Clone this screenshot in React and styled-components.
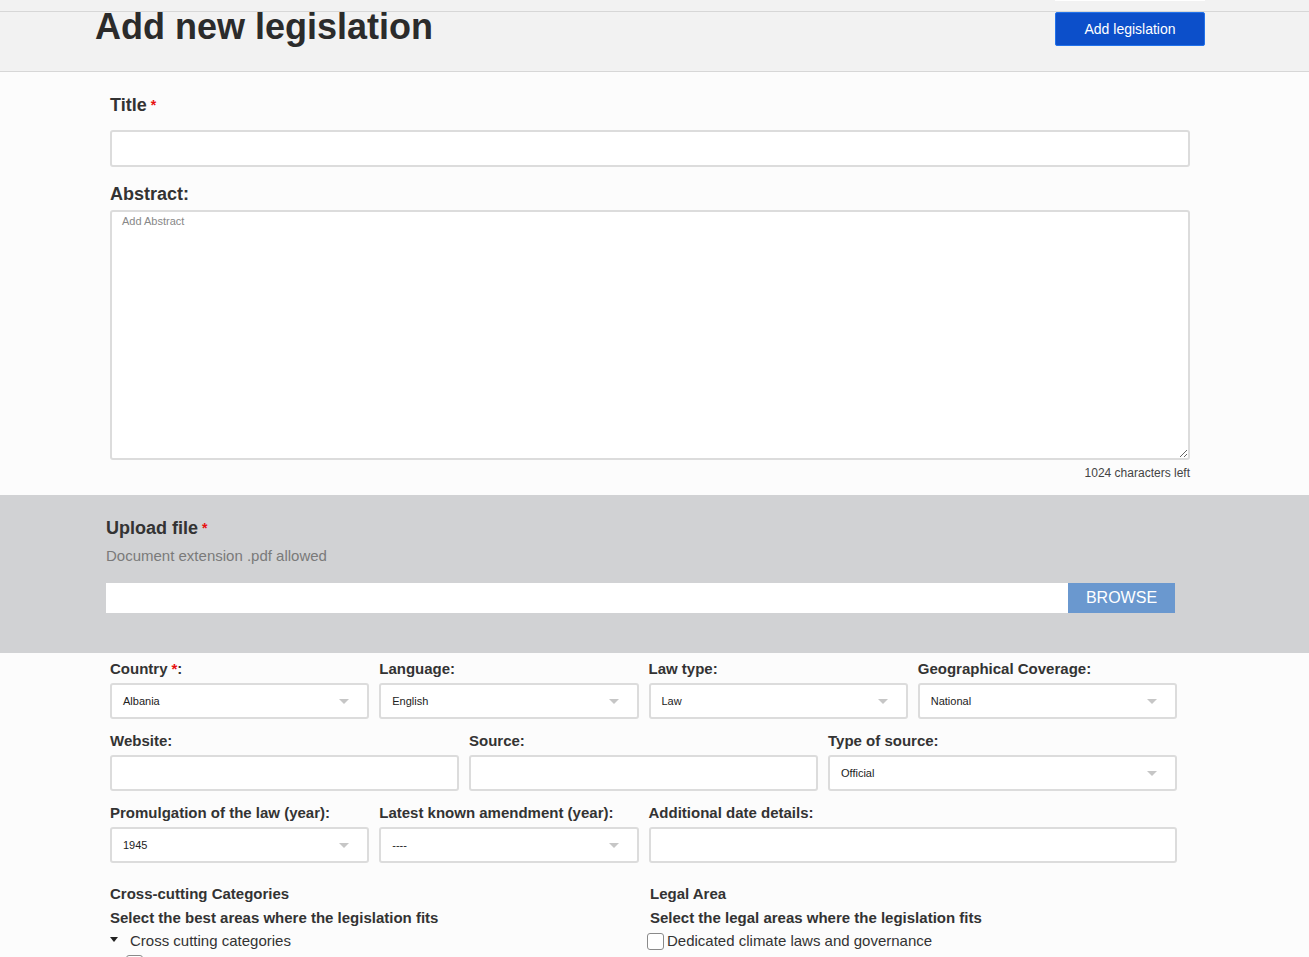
import React from "react";
import styled, { createGlobalStyle } from "styled-components";

const Global = createGlobalStyle`
  html, body {
    margin: 0;
    padding: 0;
    background: #fcfcfc;
    font-family: "Liberation Sans", Arial, Helvetica, sans-serif;
    color: #333;
  }
  * { box-sizing: border-box; }
`;

const TopStrip = styled.div`
  height: 12px;
  background: #f2f2f2;
  border-bottom: 1px solid #d7d7d7;
  display: flex;
  justify-content: flex-end;
  padding-right: 104px;
`;
const StripTab = styled.div`
  width: 150px;
  height: 1px;
  background: #fff;
`;
const Header = styled.header`
  height: 60px;
  background: #f2f2f2;
  border-bottom: 1px solid #d7d7d7;
  display: flex;
  justify-content: space-between;
  align-items: flex-start;
  padding: 0 104px 0 95px;
`;
const PageTitle = styled.h1`
  margin: 0;
  font-size: 36px;
  line-height: 30px;
  font-weight: 700;
  color: #2b2b2b;
`;
const PrimaryButton = styled.button`
  width: 150px;
  height: 34px;
  background: #0c4fca;
  border: 1px solid #2272ea;
  border-radius: 2px;
  color: #fff;
  font-family: inherit;
  font-size: 14px;
  cursor: pointer;
`;

const Section = styled.section`
  padding: 22px 119px 0 110px;
  display: flex;
  flex-direction: column;
`;
const BigLabel = styled.label`
  display: block;
  font-size: 18px;
  line-height: 22px;
  font-weight: 700;
  color: #333;
  margin-bottom: ${(p) => p.$gap || 0}px;
`;
const Req = styled.span`
  color: #e81010;
  font-size: ${(p) => p.$size || 14}px;
  margin-left: 4px;
  vertical-align: ${(p) => (p.$inline ? "baseline" : "top")};
`;
const TextInput = styled.input`
  display: block;
  width: 100%;
  height: 37px;
  border: 2px solid #dcdcdc;
  border-radius: 3px;
  background: #fff;
  font-family: inherit;
  font-size: 12px;
  padding: 0 11px;
  margin-bottom: ${(p) => p.$gap || 0}px;
  outline: none;
`;
const TextArea = styled.textarea`
  display: block;
  width: 100%;
  height: 250px;
  border: 2px solid #dcdcdc;
  border-radius: 3px;
  background: #fff;
  font-family: inherit;
  font-size: 11px;
  padding: 3px 10px;
  resize: vertical;
  outline: none;
  &::placeholder { color: #888; }
`;
const Counter = styled.div`
  text-align: right;
  font-size: 12px;
  line-height: 14px;
  color: #444;
  margin-top: 6px;
  padding-bottom: 15px;
`;

const Upload = styled.section`
  background: #d1d2d4;
  height: 158px;
  padding: 22px 134px 0 106px;
`;
const Hint = styled.div`
  font-size: 15px;
  line-height: 18px;
  color: #7a7a7a;
  margin-top: 8px;
  margin-bottom: 18px;
`;
const FileRow = styled.div`
  display: flex;
  height: 30px;
`;
const FileField = styled.div`
  flex: 1;
  background: #fff;
`;
const Browse = styled.button`
  width: 107px;
  border: none;
  background: #6a98cf;
  color: #fff;
  font-family: inherit;
  font-size: 16px;
  text-transform: uppercase;
  cursor: pointer;
`;

const Grid = styled.div`
  display: grid;
  grid-template-columns: repeat(12, 1fr);
  column-gap: 10px;
  row-gap: 13px;
  width: 1067px;
  margin-left: 110px;
  padding-top: 7px;
`;
const Field = styled.div`
  grid-column: span ${(p) => p.$span};
  display: flex;
  flex-direction: column;
  gap: 5px;
`;
const Label = styled.label`
  font-size: 15px;
  line-height: 18px;
  font-weight: 700;
  color: #333;
`;
const SelectBox = styled.div`
  height: 36px;
  border: 2px solid #dcdcdc;
  border-radius: 3px;
  background: #fff;
  display: flex;
  align-items: center;
  justify-content: space-between;
  padding: 0 18px 0 11px;
  font-size: 11px;
  color: #222;
`;
const Caret = styled.span`
  width: 0;
  height: 0;
  border-left: 5px solid transparent;
  border-right: 5px solid transparent;
  border-top: 5px solid #c6c6c6;
`;
const FieldInput = styled.div`
  height: 36px;
  border: 2px solid #dcdcdc;
  border-radius: 3px;
  background: #fff;
`;

const Categories = styled.div`
  display: grid;
  grid-template-columns: 540px 1fr;
  margin-left: 110px;
  padding-top: 19px;
  padding-bottom: 40px;
`;
const Col = styled.div`
  display: flex;
  flex-direction: column;
`;
const SubHead = styled.div`
  font-size: 15px;
  line-height: 24px;
  font-weight: 700;
  color: #333;
`;
const TreeRow = styled.div`
  display: flex;
  align-items: center;
  font-size: 15px;
  line-height: 22px;
  color: #333;
  padding-left: ${(p) => p.$indent || 0}px;
  margin-left: ${(p) => p.$shift || 0}px;
`;
const Toggle = styled.span`
  width: 0;
  height: 0;
  border-left: 4px solid transparent;
  border-right: 4px solid transparent;
  border-top: 5px solid #222;
  margin: -3px 12px 0 0;
`;
const Check = styled.span`
  width: 17px;
  height: 17px;
  border: 1px solid #8a8a8a;
  border-radius: 3px;
  background: #fff;
  margin-right: 3px;
  flex-shrink: 0;
`;

const selects1 = [
  { label: "Country", req: true, value: "Albania" },
  { label: "Language", value: "English" },
  { label: "Law type", value: "Law" },
  { label: "Geographical Coverage", value: "National" },
];

const Select = ({ value }) => (
  <SelectBox>
    <span>{value}</span>
    <Caret />
  </SelectBox>
);

export default function App() {
  return (
    <>
      <Global />
      <TopStrip>
        <StripTab />
      </TopStrip>
      <Header>
        <PageTitle>Add new legislation</PageTitle>
        <PrimaryButton>Add legislation</PrimaryButton>
      </Header>

      <Section>
        <BigLabel $gap={14}>
          Title<Req>*</Req>
        </BigLabel>
        <TextInput $gap={16} />
        <BigLabel $gap={5}>Abstract:</BigLabel>
        <TextArea placeholder="Add Abstract" />
        <Counter>1024 characters left</Counter>
      </Section>

      <Upload>
        <BigLabel>
          Upload file<Req>*</Req>
        </BigLabel>
        <Hint>Document extension .pdf allowed</Hint>
        <FileRow>
          <FileField />
          <Browse>Browse</Browse>
        </FileRow>
      </Upload>

      <Grid>
        {selects1.map((s) => (
          <Field $span={3} key={s.label}>
            <Label>
              {s.label}
              {s.req && (
                <Req $inline $size={15}>
                  *
                </Req>
              )}
              :
            </Label>
            <Select value={s.value} />
          </Field>
        ))}
        <Field $span={4}>
          <Label>Website:</Label>
          <FieldInput />
        </Field>
        <Field $span={4}>
          <Label>Source:</Label>
          <FieldInput />
        </Field>
        <Field $span={4}>
          <Label>Type of source:</Label>
          <Select value="Official" />
        </Field>
        <Field $span={3}>
          <Label>Promulgation of the law (year):</Label>
          <Select value="1945" />
        </Field>
        <Field $span={3}>
          <Label>Latest known amendment (year):</Label>
          <Select value="----" />
        </Field>
        <Field $span={6}>
          <Label>Additional date details:</Label>
          <FieldInput />
        </Field>
      </Grid>

      <Categories>
        <Col>
          <SubHead>Cross-cutting Categories</SubHead>
          <SubHead>Select the best areas where the legislation fits</SubHead>
          <TreeRow>
            <Toggle />
            Cross cutting categories
          </TreeRow>
          <TreeRow $indent={16}>
            <Check />
            Duties and rights of private entities/corporations
          </TreeRow>
        </Col>
        <Col>
          <SubHead>Legal Area</SubHead>
          <SubHead>Select the legal areas where the legislation fits</SubHead>
          <TreeRow $shift={-3}>
            <Check />
            Dedicated climate laws and governance
          </TreeRow>
        </Col>
      </Categories>
    </>
  );
}
